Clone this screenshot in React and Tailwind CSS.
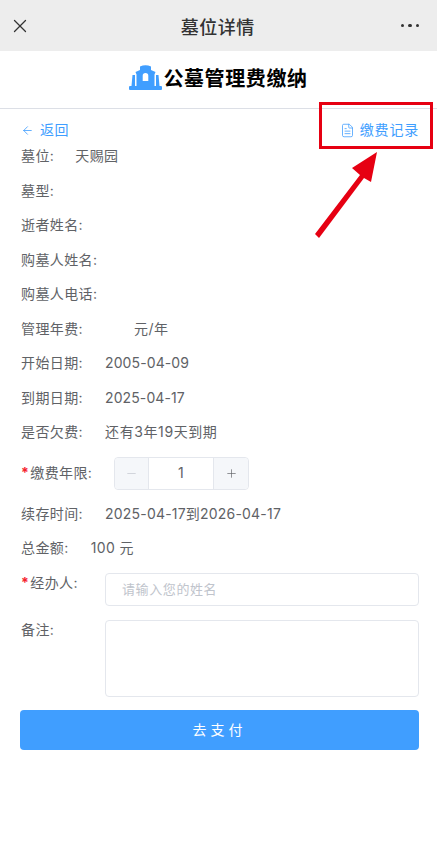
import { X, ArrowLeft, FileText, Minus, Plus } from 'lucide-react';

const font = { fontFamily: 'Inter, "Noto Sans CJK SC", sans-serif' };

const InfoRow = ({ label, value, valueLeft }) => (
  <div className="flex h-[34.5px] items-center pl-px text-sm tracking-[0.4px] text-[#606266]">
    <span>{label}:</span>
    {value && <span className={valueLeft}>{value}</span>}
  </div>
);

const Logo = () => (
  <svg className="mb-[4px]" width="33" height="25" viewBox="0 0 33 25" fill="#409eff">
    <rect x="0" y="21" width="33" height="4" rx="1" />
    <path d="M3.500 10h2.500v11H2.500z" />
    <path d="M27 10h2.500l1 11H27z" />
    <path fillRule="evenodd" d="M11 1.500Q16.500-1 22 1.500V5l4.500 2-1 2.500V21h-18V9.500L6.500 7 11 5zM16.500 8a2.800 2.800 0 0 0-2.800 2.800V16h5.600v-5.200A2.800 2.800 0 0 0 16.500 8z" />
  </svg>
);

const App = () => {
  return (
    <div className="relative h-[842px] w-[437px] overflow-hidden bg-white" style={font}>
      {/* WeChat title bar */}
      <div className="flex h-[51px] items-center justify-between bg-[#ededed] pl-[9px] pr-[18px] text-[#333]">
        <X size={22} strokeWidth={1.4} />
        <span className="pl-[4px] pt-[3px] text-[18px] font-medium tracking-[0.5px]">墓位详情</span>
        <div className="flex gap-[4px]">
          <span className="h-[3.500px] w-[3.500px] rounded-full bg-[#333]" />
          <span className="h-[3.500px] w-[3.500px] rounded-full bg-[#333]" />
          <span className="h-[3.500px] w-[3.500px] rounded-full bg-[#333]" />
        </div>
      </div>

      {/* Page heading */}
      <div className="flex h-[58px] items-center justify-center gap-px border-b border-[#dcdfe6]">
        <Logo />
        <h1 className="mb-[2px] text-[20px] font-bold tracking-[0.6px] text-black">公墓管理费缴纳</h1>
      </div>

      <div className="pl-[20px] pr-[18px]">
        <div className="flex h-[30px] items-center justify-between pl-[1px] pt-[12px] text-sm tracking-[0.4px] text-[#409eff]">
          <div className="flex items-center gap-[6px]">
            <ArrowLeft size={13} strokeWidth={1.5} />
            <span>返回</span>
          </div>
          <div className="flex items-center gap-[5px]">
            <FileText size={15} strokeWidth={1.25} />
            <span className="tracking-[0.8px]">缴费记录</span>
          </div>
        </div>

        <InfoRow label="墓位" value="天赐园" valueLeft="ml-[21px]" />
        <InfoRow label="墓型" />
        <InfoRow label="逝者姓名" />
        <InfoRow label="购墓人姓名" />
        <InfoRow label="购墓人电话" />
        <InfoRow label="管理年费" value="元/年" valueLeft="ml-[51px]" />
        <InfoRow label="开始日期" value="2005-04-09" valueLeft="ml-[22px] tracking-[0.1px]" />
        <InfoRow label="到期日期" value="2025-04-17" valueLeft="ml-[22px] tracking-[0.1px]" />
        <InfoRow label="是否欠费" value="还有3年19天到期" valueLeft="ml-[22px] tracking-[0.6px]" />

        <div className="mt-[7px] flex h-[33px] items-center pl-px text-sm tracking-[0.4px] text-[#606266]">
          <span className="w-[93px]"><span className="mr-[1px] font-bold text-[#f5222d]">*</span>缴费年限:</span>
          <div className="flex h-[33px] w-[135px] items-center rounded border border-[#e4e7ed]">
            <span className="flex h-full w-[33px] items-center justify-center rounded-l bg-[#f5f7fa] text-[#c0c4cc]"><Minus size={13} strokeWidth={1.25} /></span>
            <span className="flex h-full flex-1 items-center justify-center border-x border-[#e4e7ed]">1</span>
            <span className="flex h-full w-[34px] items-center justify-center rounded-r bg-[#f5f7fa]"><Plus size={13} strokeWidth={1.25} /></span>
          </div>
        </div>

        <div className="mt-[7px]">
          <InfoRow label="续存时间" value="2025-04-17到2026-04-17" valueLeft="ml-[22px] tracking-[0.2px]" />
          <InfoRow label="总金额" value="100 元" valueLeft="ml-[22px]" />
        </div>

        <div className="mt-[7px] flex items-start pl-px text-sm tracking-[0.4px] text-[#606266]">
          <span className="w-[84px]"><span className="mr-[1px] font-bold text-[#f5222d]">*</span>经办人:</span>
          <input
            readOnly
            placeholder="请输入您的姓名"
            className="h-[33px] flex-1 rounded border border-[#e4e7ed] px-[16px] text-[13px] tracking-[0.6px] outline-none placeholder:text-[#c0c4cc]"
          />
        </div>

        <div className="mt-[14px] flex items-start pl-px text-sm tracking-[0.4px] text-[#606266]">
          <span className="w-[84px]">备注:</span>
          <textarea readOnly className="h-[77px] flex-1 resize-none rounded border border-[#e4e7ed] outline-none" />
        </div>

        <button className="mt-[13px] h-[40px] w-full rounded bg-[#409eff] text-sm tracking-[4px] text-white">去支付</button>
      </div>

      {/* Red annotation on top of the screenshot */}
      <div className="absolute left-[319px] top-[102px] h-[47px] w-[114px] border-[3px] border-[#e60012]" />
      <svg className="absolute left-[310px] top-[150px]" width="70" height="92" viewBox="0 0 70 92" fill="#e60012">
        <path d="M67 2 L42 18 L50 25 L5 84 L9 88 L54 28 L61 32 Z" />
      </svg>
    </div>
  );
};

export default App;
